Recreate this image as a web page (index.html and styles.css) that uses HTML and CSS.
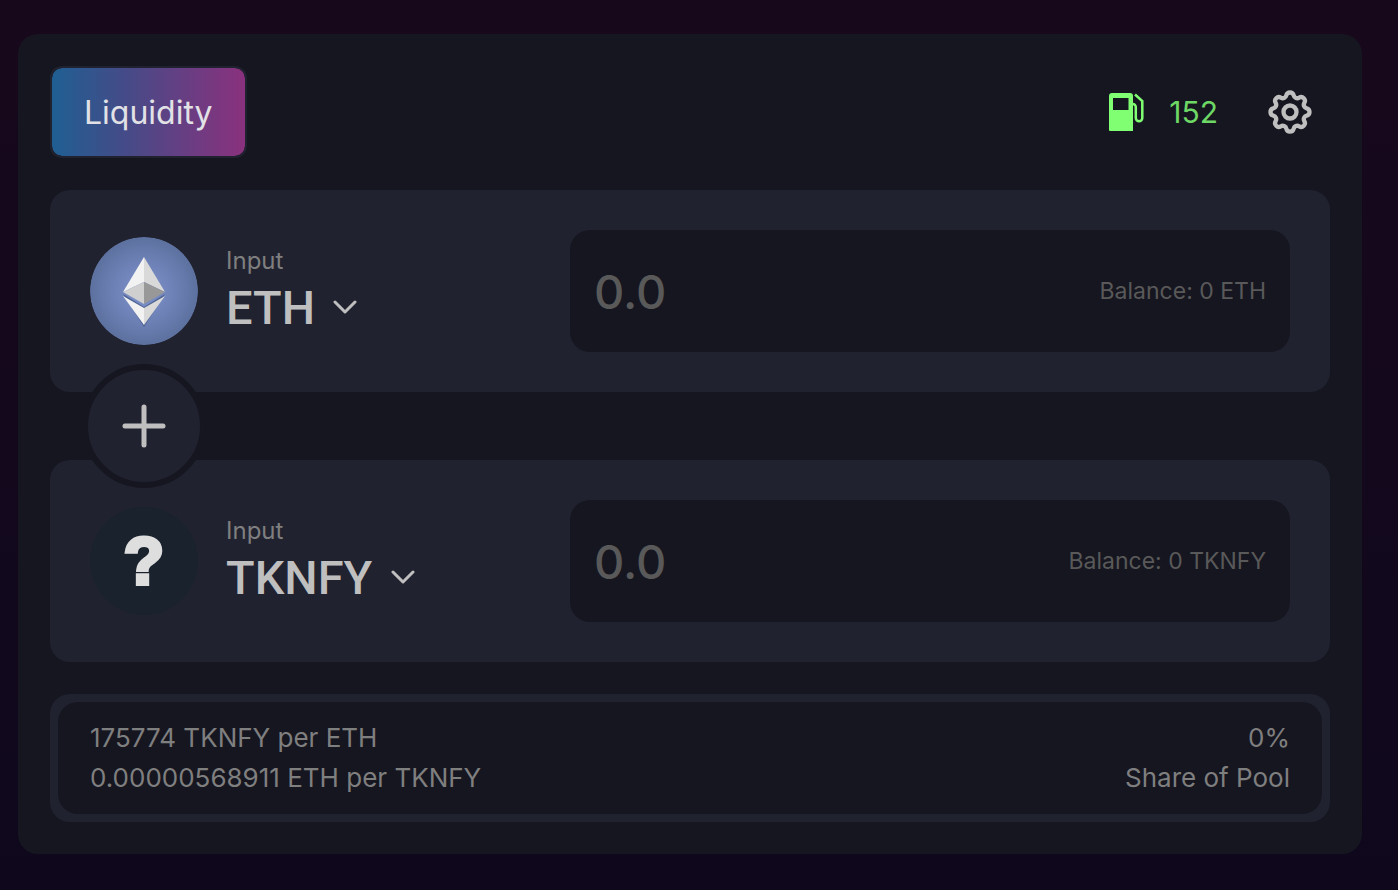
FILE: index.html
```
<!DOCTYPE html>
<html lang="en">
<head>
  <meta charset="UTF-8" />
  <meta name="viewport" content="width=device-width, initial-scale=1.0" />
  <title>Liquidity</title>
  <link rel="stylesheet" href="styles.css">
</head>
<body>
  <main class="card">
    <header class="header">
      <button class="tab" type="button">Liquidity</button>

      <div class="tools">
        <div class="gas">
          <svg class="gas-icon" viewBox="0 0 36 38" aria-hidden="true">
            <path fill="#80ff72" fill-rule="evenodd" d="M3 0h18a3 3 0 0 1 3 3v35H1a1 1 0 0 1-1-1V3a3 3 0 0 1 3-3zM4 5v12h15.500V5z" />
            <path fill="none" stroke="#80ff72" stroke-width="2.500" d="M26 1.500l7.300 6.500v17a3.200 3.200 0 0 1-6.500 0V14a3 3 0 0 0-3-3" />
          </svg>
          <span>152</span>
        </div>
        <button class="settings" type="button" aria-label="Settings">
          <svg viewBox="0 0 24 24" aria-hidden="true">
            <path d="M10.325 4.317c.426-1.756 2.924-1.756 3.350 0a1.724 1.724 0 0 0 2.573 1.066c1.543-.94 3.310.826 2.370 2.370a1.724 1.724 0 0 0 1.065 2.572c1.756.426 1.756 2.924 0 3.350a1.724 1.724 0 0 0-1.066 2.573c.94 1.543-.826 3.310-2.370 2.370a1.724 1.724 0 0 0-2.572 1.065c-.426 1.756-2.924 1.756-3.350 0a1.724 1.724 0 0 0-2.573-1.066c-1.543.94-3.310-.826-2.370-2.370a1.724 1.724 0 0 0-1.065-2.572c-1.756-.426-1.756-2.924 0-3.350a1.724 1.724 0 0 0 1.066-2.573c-.94-1.543.826-3.310 2.370-2.370.996.608 2.296.07 2.572-1.065z" />
            <circle cx="12" cy="12" r="3" />
          </svg>
        </button>
      </div>
    </header>

    <section class="panel">
      <div class="token">
        <svg class="token-icon" viewBox="0 0 108 108" aria-hidden="true">
          <defs>
            <radialGradient id="ethBg">
              <stop offset="0" stop-color="#8094ce" />
              <stop offset="0.5" stop-color="#6f83b9" />
              <stop offset="1" stop-color="#5d719f" />
            </radialGradient>
          </defs>
          <circle cx="54" cy="54" r="54" fill="url(#ethBg)" />
          <path fill="#4d6192" d="M33 57l21 13 21-13-21 33z" />
          <path fill="#f2f2f2" d="M54 20L33 55l21-10z" />
          <path fill="#d9d9d9" d="M54 20l21 35-21-10z" />
          <path fill="#cfcfcf" d="M33 55l21-10v22z" />
          <path fill="#989898" d="M75 55L54 45v22z" />
          <path fill="#f2f2f2" d="M33 59l21 12v17z" />
          <path fill="#d9d9d9" d="M75 59L54 71v17z" />
        </svg>
        <div class="token-info">
          <label for="token-a">Input</label>
          <div class="token-select">
            <select id="token-a"><option>ETH</option></select>
            <svg class="chevron" viewBox="0 0 24 14" aria-hidden="true"><path d="M2 2l10 10L22 2" /></svg>
          </div>
        </div>
      </div>
      <div class="amount">
        <input type="text" placeholder="0.0" aria-label="ETH amount">
        <span class="balance">Balance: 0 ETH</span>
      </div>
    </section>

    <div class="plus" aria-hidden="true">
      <svg viewBox="0 0 44 44"><path d="M22 3v38M3 22h38" /></svg>
    </div>

    <section class="panel">
      <div class="token">
        <div class="token-icon unknown">?</div>
        <div class="token-info">
          <label for="token-b">Input</label>
          <div class="token-select">
            <select id="token-b"><option>TKNFY</option></select>
            <svg class="chevron" viewBox="0 0 24 14" aria-hidden="true"><path d="M2 2l10 10L22 2" /></svg>
          </div>
        </div>
      </div>
      <div class="amount">
        <input type="text" placeholder="0.0" aria-label="TKNFY amount">
        <span class="balance">Balance: 0 TKNFY</span>
      </div>
    </section>

    <section class="pool">
      <div class="pool-inner">
        <div>
          <div>175774 TKNFY per ETH</div>
          <div>0.00000568911 ETH per TKNFY</div>
        </div>
        <div class="share">
          <div>0%</div>
          <div>Share of Pool</div>
        </div>
      </div>
    </section>
  </main>
</body>
</html>
```
FILE: styles.css
```
* {
  box-sizing: border-box;
}

body {
  margin: 0;
  min-height: 100vh;
  padding: 34px 36px 36px 18px;
  font-family: Inter, sans-serif;
  color: #bfbfbf;
  background: linear-gradient(#18081c, #0f081d);
}

button, input, select {
  font-family: inherit;
  color: inherit;
  background: none;
  border: none;
  margin: 0;
  padding: 0;
}

.card {
  padding: 32px;
  border-radius: 20px;
  background: #161620;
}

.header {
  display: flex;
  justify-content: space-between;
  align-items: center;
  margin-bottom: 32px;
}

.tab {
  height: 92px;
  padding: 0 32px;
  border: 2px solid #212230;
  border-radius: 12px;
  font-size: 32px;
  font-weight: 400;
  color: #e2e2e6;
  background: linear-gradient(90deg, #1f5f92, #454b88 38%, #8a317d) padding-box;
  cursor: pointer;
}

.tools {
  display: flex;
  align-items: center;
  gap: 46px;
  padding-right: 14px;
}

.gas {
  display: flex;
  align-items: center;
  gap: 24px;
  font-size: 30px;
  color: #6dd865;
}

.gas-icon {
  width: 36px;
  height: 38px;
}

.settings {
  width: 52px;
  height: 52px;
  cursor: pointer;
}

.settings svg {
  display: block;
  fill: none;
  stroke: #bfbfbf;
  stroke-width: 2;
}

.panel {
  display: flex;
  align-items: center;
  justify-content: space-between;
  padding: 40px;
  border-radius: 20px;
  background: #212230;
}

.token {
  display: flex;
  align-items: center;
  gap: 28px;
}

.token-icon {
  width: 108px;
  height: 108px;
  border-radius: 50%;
}

.unknown {
  display: flex;
  align-items: center;
  justify-content: center;
  font-family: "Liberation Sans", sans-serif;
  font-size: 66px;
  font-weight: 700;
  color: #dedede;
  -webkit-text-stroke: 4px #dedede;
  background: #1a222e;
}

.token-info label {
  display: block;
  font-size: 24px;
  line-height: 32px;
  color: #7f7f7f;
}

.token-select {
  display: flex;
  align-items: center;
  gap: 18px;
}

.token-select select {
  appearance: none;
  height: 60px;
  font-family: Roboto, sans-serif;
  font-size: 47px;
  font-weight: 500;
}

.chevron {
  width: 24px;
  height: 14px;
  fill: none;
  stroke: #bfbfbf;
  stroke-width: 3;
  stroke-linecap: round;
  stroke-linejoin: round;
}

.amount {
  display: flex;
  align-items: center;
  width: 60%;
  height: 122px;
  padding: 0 24px;
  border-radius: 20px;
  background: #161620;
}

.amount input {
  flex: 1;
  min-width: 0;
  font-size: 47px;
  font-weight: 500;
  outline: none;
}

.amount input::placeholder {
  color: #595959;
}

.balance {
  font-size: 23px;
  color: #595959;
}

/* sits between the two panels and overlaps both */
.plus {
  position: relative;
  display: flex;
  align-items: center;
  justify-content: center;
  width: 124px;
  height: 124px;
  margin: -28px 32px;
  border: 6px solid #161620;
  border-radius: 50%;
  background: #212230;
}

.plus svg {
  width: 44px;
  height: 44px;
  stroke: #bfbfbf;
  stroke-width: 5;
  stroke-linecap: round;
}

.pool {
  margin-top: 32px;
  padding: 8px;
  border-radius: 20px;
  background: #212230;
}

.pool-inner {
  display: flex;
  justify-content: space-between;
  padding: 16px 32px;
  border-radius: 20px;
  font-size: 26px;
  line-height: 40px;
  color: #7f7f7f;
  background: #161620;
}

.share {
  text-align: right;
}
```
